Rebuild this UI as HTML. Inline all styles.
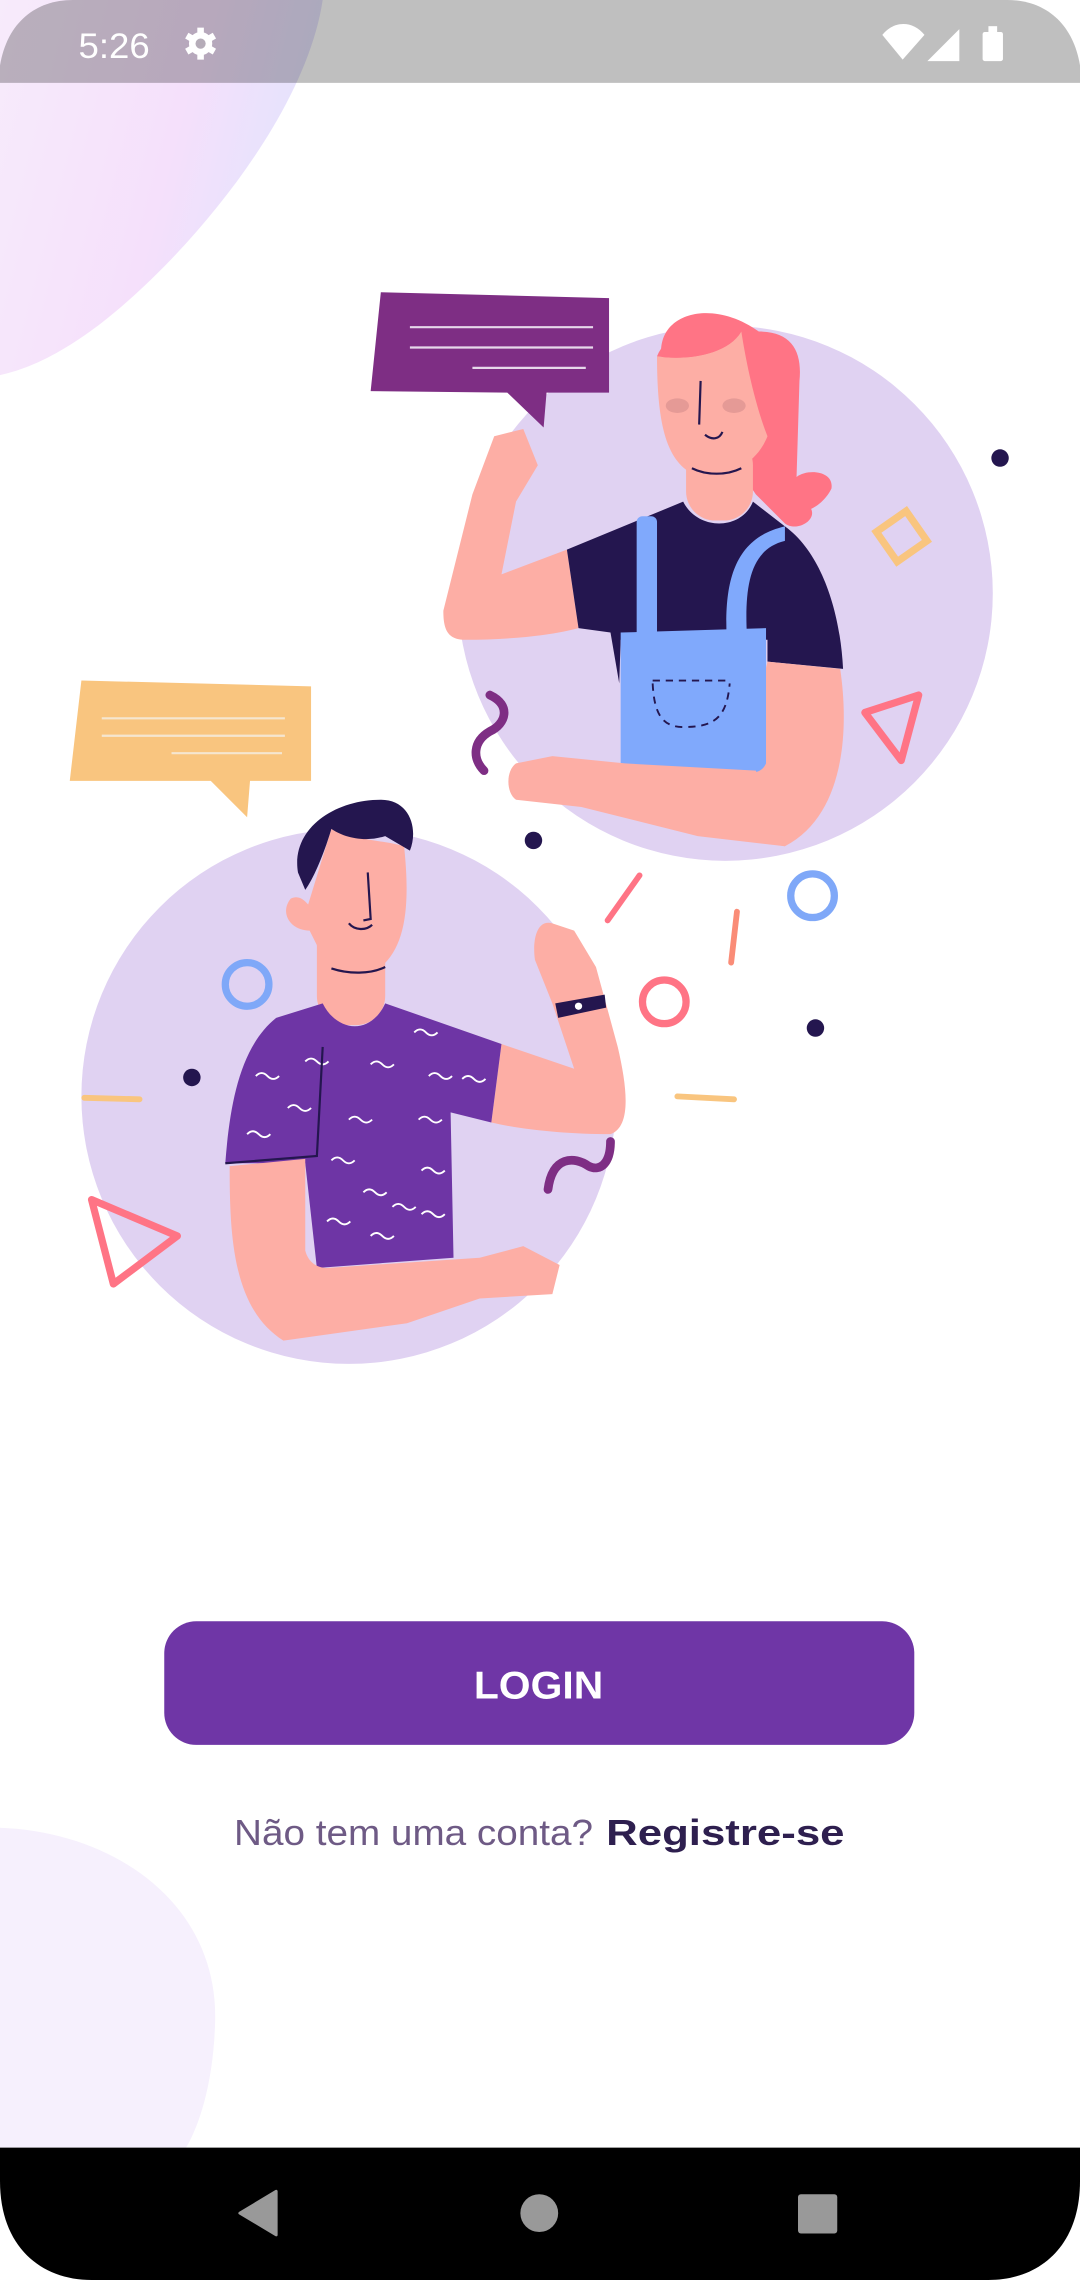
<!DOCTYPE html>
<html><head><meta charset="utf-8"><style>
html,body{margin:0;padding:0;background:#fff;}
svg{display:block;}
</style></head><body>
<svg width="1080" height="2280" viewBox="0 0 743 1568" preserveAspectRatio="none" xmlns="http://www.w3.org/2000/svg">
<defs>
<linearGradient id="g1" x1="0" y1="0" x2="1" y2="0.3">
<stop offset="0" stop-color="#f7ebfb"/><stop offset="0.6" stop-color="#f5e0fb"/><stop offset="1" stop-color="#e2e3fd"/>
</linearGradient>
</defs>
<rect width="743" height="1568" fill="#fff"/>
<path d="M0,0 L222,0 C210,80 130,175 70,222 C40,245 18,254 0,258 Z" fill="url(#g1)"/>
<path d="M0,1257 C80,1260 150,1310 148,1390 C147,1430 138,1460 128,1477 L0,1477 Z" fill="#f6f0fd"/>
<path d="M0,57 L0,45 C5,15 25,0 50,0 L693,0 C718,0 738,15 743,45 L743,57 Z" fill="rgba(0,0,0,0.25)"/>
<text x="54" y="40" font-family="Liberation Sans, sans-serif" font-size="24" fill="#fff" textLength="49" lengthAdjust="spacingAndGlyphs">5:26</text>
<g transform="translate(138,30)" fill="#fff">
<circle r="8"/>
<g stroke="#fff" stroke-width="4.5"><line x1="0" y1="-11" x2="0" y2="11"/><line x1="-9.5" y1="-5.5" x2="9.5" y2="5.5"/><line x1="-9.5" y1="5.5" x2="9.5" y2="-5.5"/></g>
<circle r="3.5" fill="#b5acb8"/>
</g>
<path d="M607,24 C615,14 628,14 636,24 L621,41 Z" fill="#fff"/>
<path d="M638,42 L660,20 L660,42 Z" fill="#fff"/>
<rect x="676" y="22" width="14" height="20" rx="1.5" fill="#fff"/><rect x="680" y="18" width="6" height="5" fill="#fff"/>

<circle cx="499" cy="408" r="184" fill="#e0d2f2"/>
<circle cx="240" cy="754" r="184" fill="#e0d2f2"/>

<path d="M262,201 L419,205 L419,270 L376,270 L374,294 L349,270 L255,269 Z" fill="#7e2e84"/>
<g stroke="#e6d8ea" stroke-width="1.5"><line x1="282" y1="225" x2="408" y2="225"/><line x1="282" y1="239" x2="408" y2="239"/><line x1="325" y1="253" x2="403" y2="253"/></g>
<path d="M56,468 L214,472 L214,537 L172,537 L170,562 L145,537 L48,537 Z" fill="#f9c57f"/>
<g stroke="#f5e6d0" stroke-width="1.5"><line x1="70" y1="494" x2="196" y2="494"/><line x1="70" y1="506" x2="196" y2="506"/><line x1="118" y1="518" x2="194" y2="518"/></g>

<!-- woman -->
<path d="M455,245 C452,215 490,205 522,228 C545,228 552,242 550,262 L548,328 C556,322 574,324 572,336 C568,344 562,348 558,350 C562,358 548,366 540,360 L520,340 Z" fill="#ff7485"/>
<rect x="472" y="300" width="46" height="58" rx="20" fill="#fdaea5"/>
<path d="M452,245 C470,248 500,245 510,228 C515,260 522,285 528,300 C520,320 500,330 475,325 C458,315 452,290 452,245 Z" fill="#fdaea5"/>
<path d="M452,245 C460,225 495,215 510,228 C500,245 470,248 452,245 Z" fill="#ff7485"/>
<ellipse cx="466" cy="279" rx="8" ry="5" fill="#e59a96"/><ellipse cx="505" cy="279" rx="8" ry="5" fill="#e59a96"/>
<path d="M482,262 L481,292 M476,322 C486,327 500,327 510,322 M485,299 C490,303 495,302 497,297" stroke="#24164f" stroke-width="1.5" fill="none"/>
<path d="M305,420 L325,340 L340,300 L360,295 L370,320 L355,345 L345,395 L390,378 L398,432 C380,437 350,440 320,440 C308,440 305,433 305,420 Z" fill="#fdaea5"/>
<path d="M390,378 L470,345 C480,365 510,365 518,345 L540,362 C565,380 578,420 580,460 L528,455 L528,440 L427,440 L426,470 L420,435 L398,432 Z" fill="#24164f"/>
<path d="M528,455 L578,460 C584,500 582,560 540,582 L500,575 Z" fill="#fdaea5"/>
<path d="M427,435 L527,432 L527,525 C525,530 520,532 515,531 L427,528 Z" fill="#80a9fc"/>
<rect x="438" y="355" width="14" height="85" rx="4" fill="#80a9fc"/>
<path d="M500,440 C498,400 505,370 540,362 L540,372 C515,378 512,405 514,440 Z" fill="#80a9fc"/>
<path d="M449,468 L503,468 M449,470 C450,490 455,500 470,500 C490,500 500,495 502,470" stroke="#24164f" stroke-width="1.3" stroke-dasharray="5,4" fill="none"/>
<path d="M355,525 L380,520 L430,525 L520,530 L540,582 L480,575 L400,555 L355,550 C348,545 348,530 355,525 Z" fill="#fdaea5"/>

<!-- man -->
<rect x="218" y="630" width="47" height="75" rx="20" fill="#fdaea5"/>
<path d="M228,570 C245,578 265,578 278,582 C282,620 280,650 262,665 C245,672 225,665 218,650 L213,640 C200,640 192,628 200,618 C206,615 210,620 212,622 Z" fill="#fdaea5"/>
<path d="M205,600 C200,570 230,550 262,550 C282,550 288,570 282,585 L265,575 C250,580 235,575 228,570 C222,590 215,605 210,612 Z" fill="#24164f"/>
<path d="M253,600 L255,632 L250,633 M240,635 C244,640 252,640 256,636 M228,666 C240,670 255,670 265,665" stroke="#24164f" stroke-width="1.5" fill="none"/>
<path d="M338,772 L345,718 L395,735 L380,690 L368,660 C366,645 370,632 380,635 L395,640 L410,665 L425,720 C432,750 434,775 420,780 C390,780 360,777 338,772 Z" fill="#fdaea5"/>
<path d="M382,690 L416,684 L417,693 L384,700 Z" fill="#24164f"/><circle cx="398" cy="692" r="2.5" fill="#fff"/>
<path d="M155,800 C158,760 165,720 190,700 L222,690 C232,710 255,712 265,690 L345,718 L338,772 L310,765 L312,865 L218,872 L210,800 Z" fill="#6e35a5"/>
<path d="M158,802 C158,850 160,900 195,922 L280,910 L330,893 L380,890 L385,870 L360,857 L330,865 L225,872 C218,872 212,868 210,860 L210,797 Z" fill="#fdaea5"/>
<g stroke="#fff" stroke-width="1.3" fill="none">
<path d="M176,740 q4,-4 8,0 q4,4 8,0"/><path d="M198,762 q4,-4 8,0 q4,4 8,0"/><path d="M170,780 q4,-4 8,0 q4,4 8,0"/><path d="M228,798 q4,-4 8,0 q4,4 8,0"/><path d="M255,732 q4,-4 8,0 q4,4 8,0"/><path d="M285,710 q4,-4 8,0 q4,4 8,0"/><path d="M295,740 q4,-4 8,0 q4,4 8,0"/><path d="M318,742 q4,-4 8,0 q4,4 8,0"/><path d="M240,770 q4,-4 8,0 q4,4 8,0"/><path d="M288,770 q4,-4 8,0 q4,4 8,0"/><path d="M250,820 q4,-4 8,0 q4,4 8,0"/><path d="M290,805 q4,-4 8,0 q4,4 8,0"/><path d="M270,830 q4,-4 8,0 q4,4 8,0"/><path d="M225,840 q4,-4 8,0 q4,4 8,0"/><path d="M255,850 q4,-4 8,0 q4,4 8,0"/><path d="M290,835 q4,-4 8,0 q4,4 8,0"/><path d="M210,730 q4,-4 8,0 q4,4 8,0"/>
</g>
<path d="M155,800 L218,795 L222,720" stroke="#24164f" stroke-width="1.5" fill="none"/>

<g fill="#24164f"><circle cx="688" cy="315" r="6"/><circle cx="367" cy="578" r="6"/><circle cx="561" cy="707" r="6"/><circle cx="132" cy="741" r="6"/></g>
<g fill="none" stroke-linecap="round">
<circle cx="559" cy="616" r="15" stroke="#7fa8f8" stroke-width="5"/>
<circle cx="170" cy="677" r="15" stroke="#7fa8f8" stroke-width="5"/>
<circle cx="457" cy="689" r="15" stroke="#ff7485" stroke-width="5"/>
<rect x="608" y="356" width="25" height="25" transform="rotate(-35 621 369)" stroke="#f9c57f" stroke-width="5"/>
<path d="M595,490 L632,478 L620,523 Z" stroke="#ff7485" stroke-width="5" stroke-linejoin="round"/>
<path d="M63,825 L122,850 L78,883 Z" stroke="#ff7485" stroke-width="5" stroke-linejoin="round"/>
<path d="M337,478 C352,485 348,498 337,503 C325,510 325,522 333,530" stroke="#7e2e84" stroke-width="6"/>
<path d="M377,818 C380,795 395,795 405,802 C413,806 420,800 420,785" stroke="#7e2e84" stroke-width="6"/>
<line x1="418" y1="633" x2="440" y2="602" stroke="#ff7485" stroke-width="4"/>
<line x1="503" y1="662" x2="507" y2="627" stroke="#fa8c77" stroke-width="4"/>
<line x1="58" y1="755" x2="96" y2="756" stroke="#f9c57f" stroke-width="4"/>
<line x1="466" y1="754" x2="505" y2="756" stroke="#f9c57f" stroke-width="4"/>
</g>

<rect x="113" y="1115" width="516" height="85" rx="22" fill="#6f36a6"/>
<text x="326" y="1168" font-family="Liberation Sans, sans-serif" font-size="27" font-weight="bold" fill="#fff" textLength="89" lengthAdjust="spacingAndGlyphs">LOGIN</text>
<text x="161" y="1269" font-family="Liberation Sans, sans-serif" font-size="25" fill="#6e5a85" textLength="247" lengthAdjust="spacingAndGlyphs">Não tem uma conta?</text>
<text x="417" y="1269" font-family="Liberation Sans, sans-serif" font-size="25" font-weight="bold" fill="#2e1f4f" textLength="164" lengthAdjust="spacingAndGlyphs">Registre-se</text>

<path d="M0,1477 L743,1477 L743,1500 C743,1545 715,1568 680,1568 L63,1568 C28,1568 0,1545 0,1500 Z" fill="#000"/>
<path d="M165,1522 L190,1507 L190,1537 Z" fill="#999" stroke="#999" stroke-width="2" stroke-linejoin="round"/>
<circle cx="371" cy="1522" r="13" fill="#999"/>
<rect x="549" y="1509" width="27" height="27" rx="2" fill="#999"/>
</svg>
</body></html>
